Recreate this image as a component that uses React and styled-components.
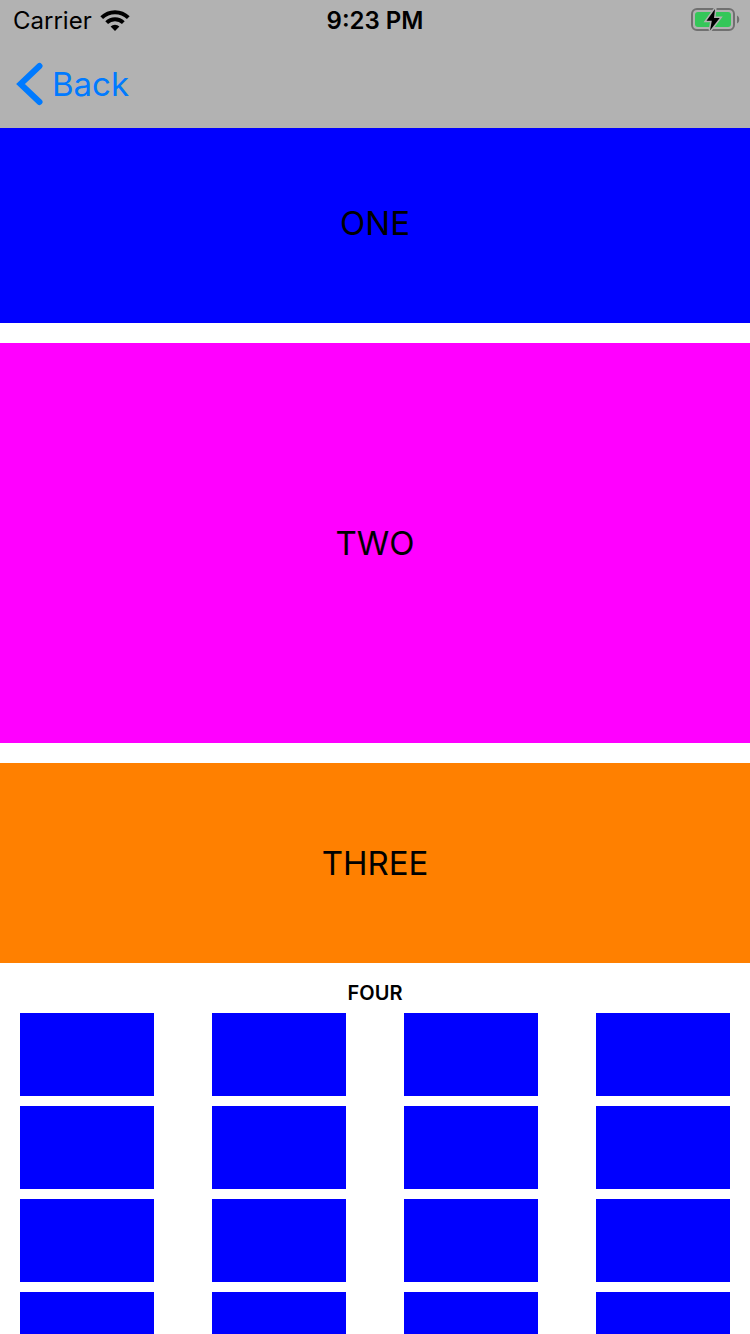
import React from 'react';
import styled, { createGlobalStyle } from 'styled-components';

const GlobalStyle = createGlobalStyle`
  *, *::before, *::after { box-sizing: border-box; }
  body {
    margin: 0;
    background: #ffffff;
    color: #000000;
    font-family: Inter, "Liberation Sans", sans-serif;
  }
`;

const Screen = styled.div`
  display: flex;
  flex-direction: column;
  height: 100vh;
  overflow: hidden;
`;

const TopBar = styled.header`
  flex: none;
  background: #b2b2b2;
`;

const StatusBar = styled.div`
  display: grid;
  grid-template-columns: 1fr auto 1fr;
  align-items: center;
  height: 42px;
  padding: 0 10px;
  font-size: 24px;
  line-height: 42px;
`;

const Carrier = styled.div`
  display: flex;
  align-items: center;
  gap: 8px;
  padding-left: 3px;
`;

const Time = styled.time`
  font-weight: 600;
`;

const BatteryIcon = styled.svg`
  justify-self: end;
`;

const NavBar = styled.nav`
  display: flex;
  align-items: center;
  height: 86px;
  padding: 0 16px 2px;
`;

const BackButton = styled.button`
  display: flex;
  align-items: center;
  gap: 8px;
  padding: 0;
  border: 0;
  background: none;
  color: #007aff;
  font: inherit;
  font-size: 33px;
  line-height: 44px;
  cursor: pointer;
`;

const Content = styled.main`
  flex: 1;
  min-height: 0;
  overflow-y: auto;
  scrollbar-width: none;
`;

const Panels = styled.div`
  display: flex;
  flex-direction: column;
  gap: 20px;
`;

const Panel = styled.section`
  display: flex;
  align-items: center;
  justify-content: center;
  height: ${({ $height }) => $height}px;
  padding-bottom: ${({ $inset = 0 }) => $inset}px;
  background: ${({ $color }) => $color};
  font-size: 33px;
  line-height: 40px;
`;

const GridTitle = styled.h2`
  margin: 0;
  padding: 10px 0 0;
  font-size: 20px;
  font-weight: 600;
  line-height: 40px;
  text-align: center;
`;

const CellGrid = styled.div`
  display: grid;
  grid-template-columns: repeat(4, 1fr);
  grid-auto-rows: 83px;
  gap: 10px 58px;
  padding: 0 20px;
`;

const Cell = styled.div`
  background: #0000ff;
`;

const cells = Array.from({ length: 16 }, (_, index) => index);

function WifiIcon() {
  return (
    <svg width="30" height="24" viewBox="0 0 30 24" fill="none" aria-hidden="true">
      <path d="M1.7 8.7A18.8 18.8 0 0 1 28.3 8.7" stroke="#000" strokeWidth="3.9" />
      <path d="M6.66 13.66A11.8 11.8 0 0 1 23.34 13.66" stroke="#000" strokeWidth="3.9" />
      <path d="M15 22L10.6 17.6A6.2 6.2 0 0 1 19.4 17.6Z" fill="#000" />
    </svg>
  );
}

function Battery() {
  return (
    <BatteryIcon width="49" height="26" viewBox="0 0 49 26" role="img" aria-label="Battery charging">
      <rect x="1" y="1" width="42" height="21" rx="5" fill="none" stroke="#707070" strokeWidth="2" />
      <path d="M46 7.5c3 1.3 3 6.7 0 8z" fill="#707070" />
      <rect x="4" y="4" width="36" height="15" rx="3" fill="#34c759" />
      <path
        d="M24 1L15.5 12.8H20.8L19 22.5L28.7 10H23z"
        fill="#000"
        stroke="#b2b2b2"
        strokeWidth="3"
        paintOrder="stroke"
      />
    </BatteryIcon>
  );
}

function BackChevron() {
  return (
    <svg width="28" height="44" viewBox="0 0 28 44" fill="none" aria-hidden="true">
      <path d="M23.5 4L4.5 22L23.5 40" stroke="currentColor" strokeWidth="6" strokeLinecap="round" />
    </svg>
  );
}

export default function App() {
  return (
    <>
      <GlobalStyle />
      <Screen>
        <TopBar>
          <StatusBar>
            <Carrier>
              Carrier
              <WifiIcon />
            </Carrier>
            <Time>9:23 PM</Time>
            <Battery />
          </StatusBar>
          <NavBar>
            <BackButton type="button">
              <BackChevron />
              Back
            </BackButton>
          </NavBar>
        </TopBar>
        <Content>
          <Panels>
            <Panel $height={195} $inset={5} $color="#0000ff">ONE</Panel>
            <Panel $height={400} $color="#ff00ff">TWO</Panel>
            <Panel $height={200} $color="#ff8000">THREE</Panel>
          </Panels>
          <GridTitle>FOUR</GridTitle>
          <CellGrid>
            {cells.map((cell) => (
              <Cell key={cell} />
            ))}
          </CellGrid>
        </Content>
      </Screen>
    </>
  );
}
